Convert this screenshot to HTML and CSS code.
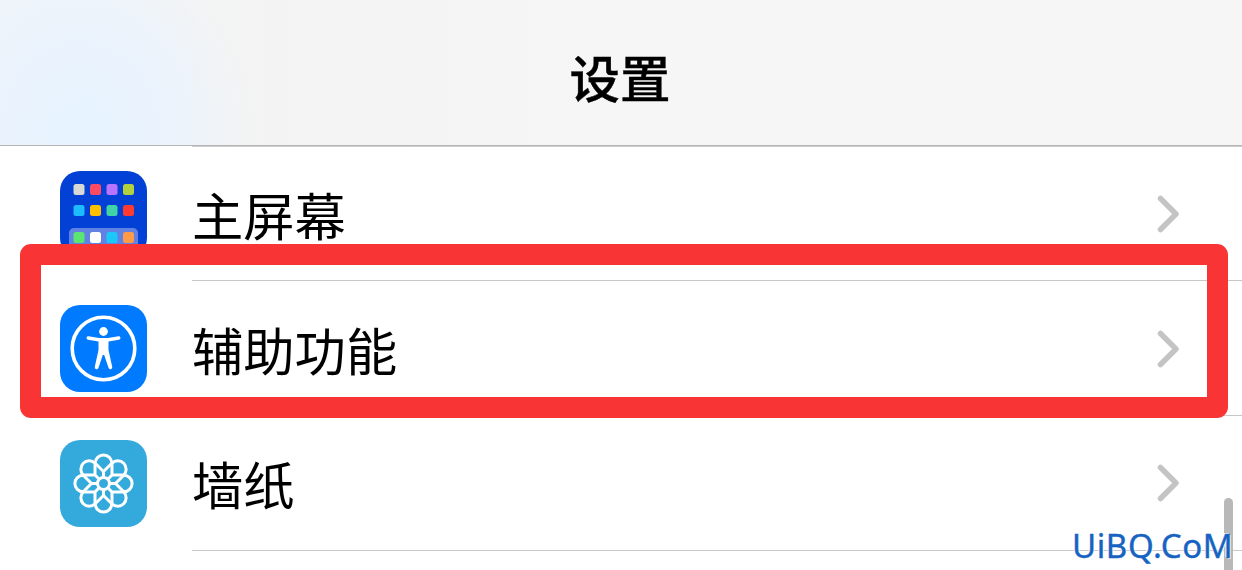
FILE: index.html
```html
<!DOCTYPE html>
<html lang="zh-CN">
<head>
<meta charset="utf-8">
<title>设置</title>
<link rel="stylesheet" href="styles.css">
</head>
<body>
<main class="screen">
  <header class="navbar"><h1 class="title">设置</h1></header>
  <ul class="list">
    <li class="row">
      <svg class="icon" viewBox="0 0 87 87">
        <rect width="87" height="87" rx="20" fill="#0340d6"/>
        <rect x="9" y="57" width="69" height="23" rx="5" fill="#6182e3"/>
        <g>
          <rect x="13.500" y="13" width="11" height="11" rx="2.500" fill="#d8d8d4"/>
          <rect x="30" y="13" width="11" height="11" rx="2.500" fill="#ff4a64"/>
          <rect x="46.500" y="13" width="11" height="11" rx="2.500" fill="#b873ff"/>
          <rect x="63" y="13" width="11" height="11" rx="2.500" fill="#b3d13c"/>
          <rect x="13.500" y="34" width="11" height="11" rx="2.500" fill="#1cbcff"/>
          <rect x="30" y="34" width="11" height="11" rx="2.500" fill="#ffc000"/>
          <rect x="46.500" y="34" width="11" height="11" rx="2.500" fill="#3fd3a7"/>
          <rect x="63" y="34" width="11" height="11" rx="2.500" fill="#ff3a30"/>
          <rect x="13.500" y="61" width="11" height="11" rx="2.500" fill="#5be672"/>
          <rect x="30" y="61" width="11" height="11" rx="2.500" fill="#fff"/>
          <rect x="46.500" y="61" width="11" height="11" rx="2.500" fill="#1cc8fa"/>
          <rect x="63" y="61" width="11" height="11" rx="2.500" fill="#ff9b46"/>
        </g>
      </svg>
      <div class="body"><span class="label">主屏幕</span><svg class="chevron" viewBox="0 0 24 38"><path d="M3.500 3.500 19 19 3.500 34.500"/></svg></div>
    </li>
    <li class="row">
      <svg class="icon" viewBox="0 0 87 87">
        <rect width="87" height="87" rx="20" fill="#007aff"/>
        <circle cx="43.500" cy="43.500" r="31.300" fill="none" stroke="#fff" stroke-width="3.600"/>
        <circle cx="43.500" cy="26.500" r="4.400" fill="#fff"/>
        <path fill="#fff" d="M28.500 31.300 39 33h9l10.500-1.700a1.700 1.700 0 0 1 .5 3.400L48.500 36.600v8.400l3.700 16.800a1.900 1.900 0 0 1-3.700 1L44.200 50h-1.400L38.500 62.800a1.900 1.900 0 0 1-3.700-1L38.500 45v-8.400l-10.500-1.900a1.700 1.700 0 0 1 .5-3.400z"/>
      </svg>
      <div class="body"><span class="label">辅助功能</span><svg class="chevron" viewBox="0 0 24 38"><path d="M3.500 3.500 19 19 3.500 34.500"/></svg></div>
    </li>
    <li class="row">
      <svg class="icon" viewBox="0 0 87 87">
        <defs><path id="petal" d="M0-5V-12L-8.300-20.300A8.300 8.300 0 1 1 8.300-20.300L0-12"/></defs>
        <rect width="87" height="87" rx="20" fill="#34aadc"/>
        <g transform="translate(43.500 43.500)" fill="none" stroke="#fff" stroke-width="3">
          <circle r="6"/>
          <use href="#petal"/><use href="#petal" transform="rotate(45)"/><use href="#petal" transform="rotate(90)"/><use href="#petal" transform="rotate(135)"/><use href="#petal" transform="rotate(180)"/><use href="#petal" transform="rotate(225)"/><use href="#petal" transform="rotate(270)"/><use href="#petal" transform="rotate(315)"/>
        </g>
      </svg>
      <div class="body"><span class="label">墙纸</span><svg class="chevron" viewBox="0 0 24 38"><path d="M3.500 3.500 19 19 3.500 34.500"/></svg></div>
    </li>
  </ul>
  <div class="scrollbar"></div>
  <div class="highlight"></div>
  <div class="watermark">UiBQ.CoM</div>
</main>
</body>
</html>
```
FILE: styles.css
```css
* { box-sizing: border-box; }
body { margin: 0; background: #fff; color: #000; font-family: "Liberation Sans", "Noto Sans CJK SC", sans-serif; }
.screen { position: relative; width: 1242px; height: 570px; overflow: hidden; background: #fff; }
.navbar {
  height: 146px; display: flex; justify-content: center; padding: 38px 2px 0 0;
  border-bottom: 1px solid #b5b5b5;
  background: radial-gradient(ellipse 170px 190px at 80px 130px, #e6f3ff 0%, #ebf3fd 50%, rgba(239,243,248,0) 100%), linear-gradient(90deg, #f1f4f6 0, #f3f3f3 280px, #f6f6f6 600px, #f6f6f6 100%);
}
.title { margin: 0; font: 500 50.5px/76px "Noto Sans CJK SC", sans-serif; -webkit-text-stroke: 0.4px #000; }
.list { list-style: none; margin: 0; padding: 0; }
.row { display: flex; height: 134.7px; padding-left: 60px; }
.row:first-child { height: 135.2px; }
.row:first-child .icon { margin-top: 25px; }
.icon { width: 87px; height: 87px; margin-top: 24.3px; flex: none; }
.row:nth-child(2) .icon { margin-top: 24px; }
.body { flex: 1; margin-left: 45px; display: flex; align-items: center; justify-content: space-between; padding: 1px 61px 0 0; border-bottom: 1px solid #c8c8c8; }
.row:first-child .body { border-top: 1px solid #cecece; }
.label { font: 400 51.3px/76px "Noto Sans CJK SC", sans-serif; }
.chevron { width: 24px; height: 38px; }
.chevron path { fill: none; stroke: #c4c4c4; stroke-width: 5.5; stroke-linecap: round; stroke-linejoin: round; }
.scrollbar { position: absolute; left: 1224px; top: 498px; width: 9px; height: 90px; border-radius: 5px; background: #b8b8b8; }
.highlight { position: absolute; left: 20px; top: 244px; width: 1208px; height: 174px; border: 21px solid #f83434; border-radius: 11px; }
.watermark { position: absolute; left: 1072px; top: 525px; font: 400 33px/42px "Noto Sans", sans-serif; letter-spacing: 0.6px; color: #1763c2; -webkit-text-stroke: 0.4px #1763c2; white-space: nowrap; text-shadow: 0 0 1px #fff, 1px 1px 0 #fff, -1px -1px 0 #fff; }
```
